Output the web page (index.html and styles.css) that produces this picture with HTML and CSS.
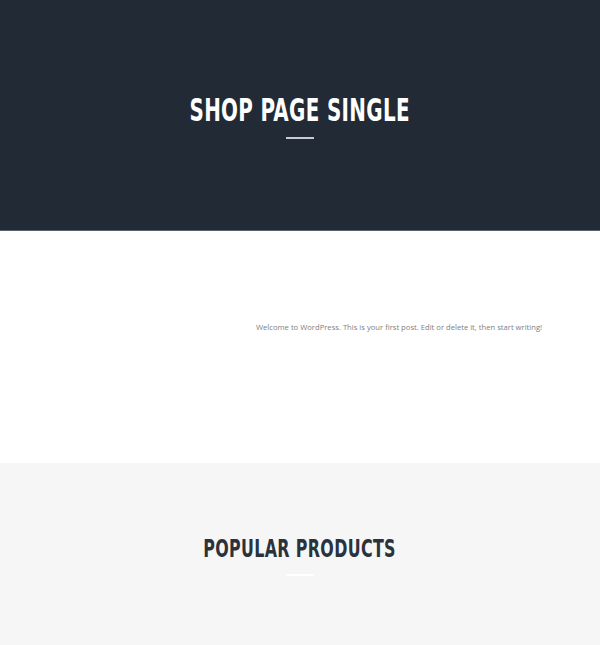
FILE: index.html
```html
<!DOCTYPE html>
<html>
<head>
<meta charset="utf-8">
<link rel="stylesheet" href="styles.css">
</head>
<body>
<header class="hero">
  <h1 class="hero-title"><span class="cond">SHOP PAGE SINGLE</span></h1>
  <div class="rule rule-light"></div>
</header>
<main class="post">
  <p class="post-text">Welcome to WordPress. This is your first post. Edit or delete it, then start writing!</p>
</main>
<section class="popular">
  <h2 class="popular-title"><span class="cond">POPULAR PRODUCTS</span></h2>
  <div class="rule rule-white"></div>
</section>
</body>
</html>
```
FILE: styles.css
```css
html, body {
  margin: 0;
  padding: 0;
  background: #ffffff;
}
body {
  font-family: "DejaVu Sans Condensed", "Liberation Sans", sans-serif;
}
.hero {
  background: #222b35;
  height: 231px;
  border-bottom: 1px solid #56626c;
  display: flex;
  flex-direction: column;
  align-items: center;
  padding-top: 92px;
  box-sizing: border-box;
}
.hero-title {
  margin: 0;
  color: #ffffff;
  font-size: 32px;
  line-height: 36px;
  font-weight: bold;
  letter-spacing: 0.5px;
}
.cond {
  display: inline-block;
  transform: scaleX(0.69);
}
.rule {
  width: 28px;
  height: 2px;
  margin-top: 9px;
}
.rule-light {
  background: #c8ccd0;
}
.rule-white {
  background: #ffffff;
}
.post {
  height: 232px;
  display: flex;
  align-items: center;
  padding-left: 256px;
}
.post-text {
  margin: 0;
  font-family: "Open Sans", "DejaVu Sans", sans-serif;
  font-size: 7.65px;
  color: #808080;
  margin-top: -40px;
}
.popular {
  background: #f6f6f6;
  height: 182px;
  display: flex;
  flex-direction: column;
  align-items: center;
  padding-top: 71px;
  box-sizing: border-box;
}
.popular-title {
  margin: 0;
  color: #2a323c;
  font-size: 25px;
  line-height: 30px;
  font-weight: bold;
  letter-spacing: 0.5px;
}
.popular-title .cond {
  transform: scaleX(0.705);
}
.popular .rule {
  margin-top: 10px;
}
```
